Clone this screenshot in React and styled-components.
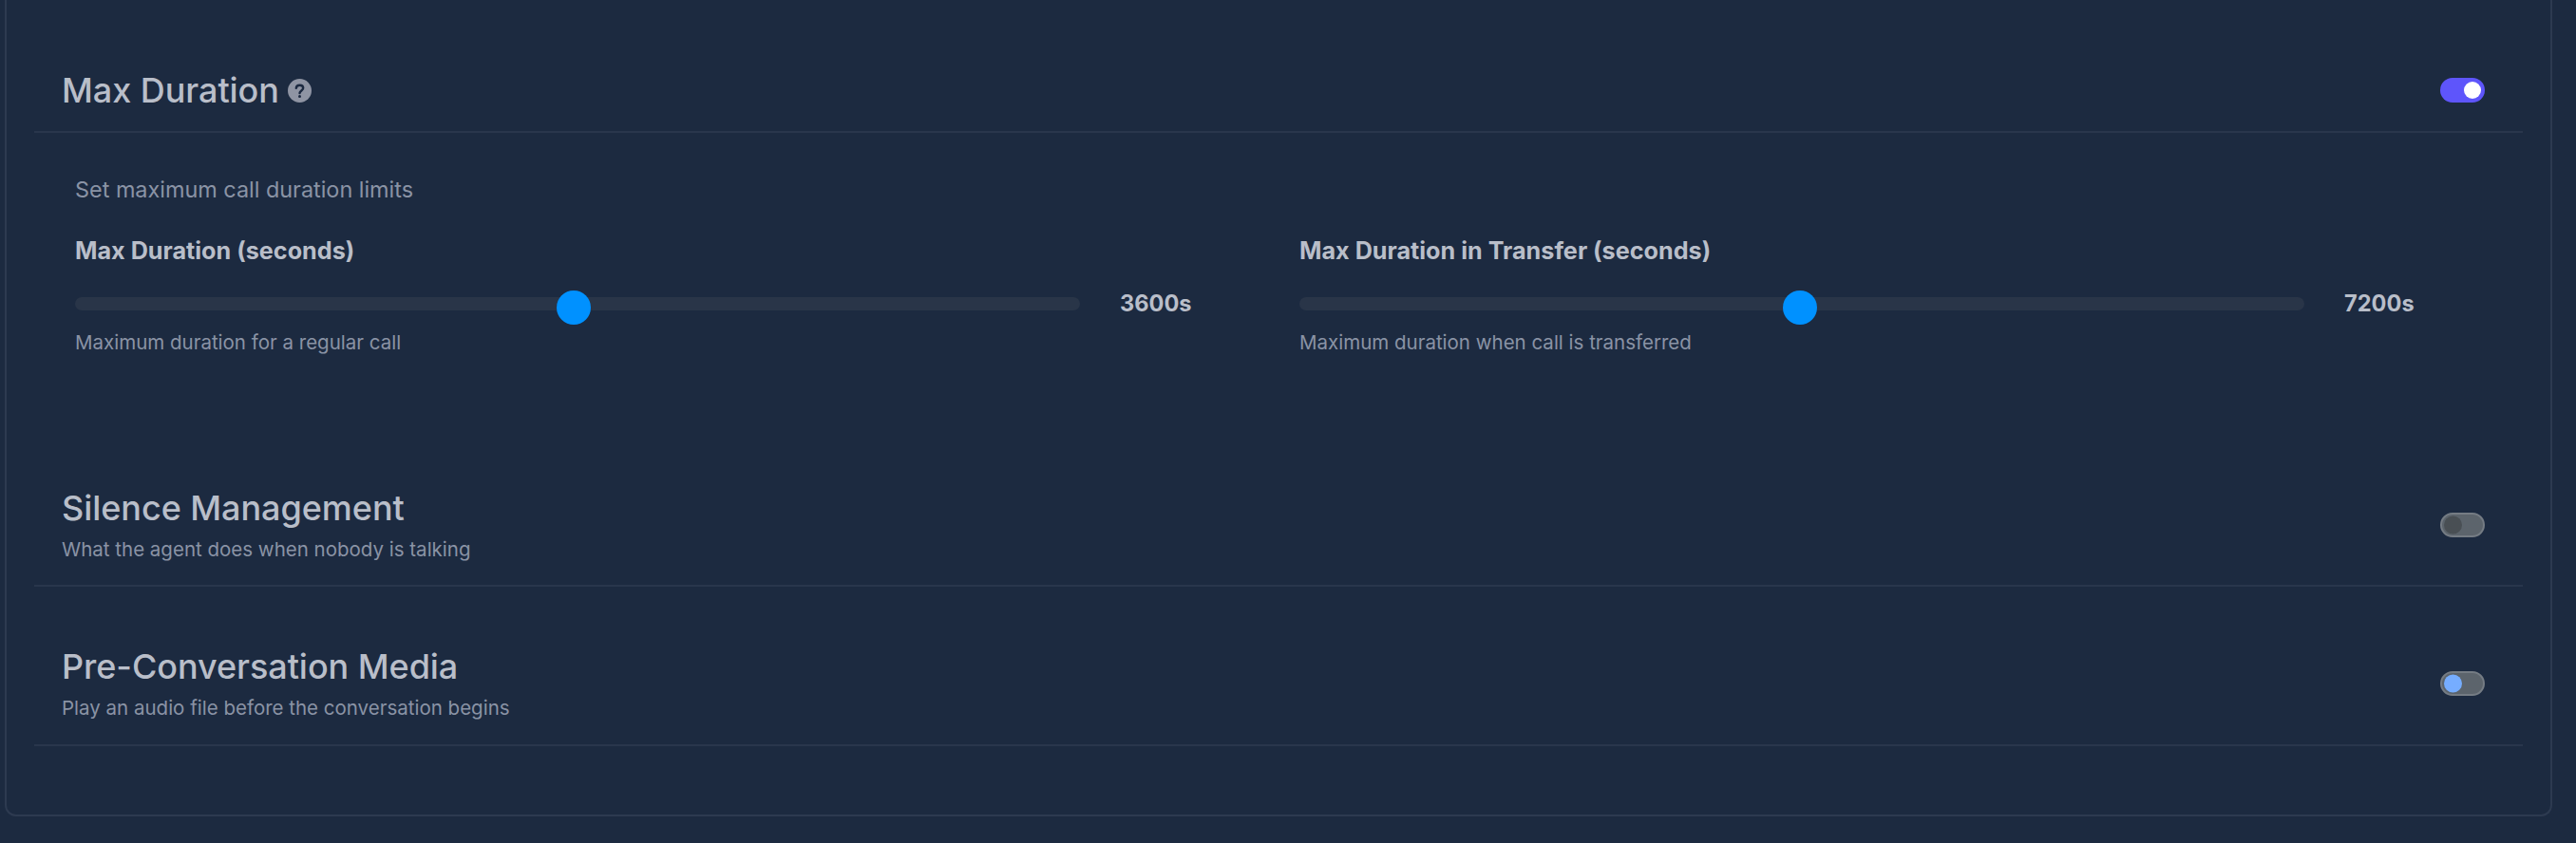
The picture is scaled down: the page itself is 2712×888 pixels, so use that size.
import styled, { createGlobalStyle } from 'styled-components'

const GlobalStyle = createGlobalStyle`
  html, body {
    margin: 0;
    padding: 0;
    background: #1c2a40;
  }
  * {
    box-sizing: border-box;
  }
`

const Page = styled.div`
  width: 2712px;
  height: 888px;
  overflow: hidden;
  padding: 0 25px 28px 5px;
  font-family: Inter, "Liberation Sans", sans-serif;
`

const Panel = styled.div`
  height: 860px;
  padding: 0 29px 0 29px;
  border: 2px solid #2d3a50;
  border-top: none;
  border-radius: 0 0 12px 12px;
`

const Section = styled.section`
  display: flex;
  flex-direction: column;
`

const Header = styled.div`
  display: flex;
  align-items: center;
  justify-content: space-between;
  height: ${p => p.$height}px;
  padding: ${p => p.$top}px 40px 0 29px;
  border-bottom: 2px solid #29364c;
`

const TitleRow = styled.div`
  display: flex;
  align-items: center;
  gap: 9px;
`

const Title = styled.h2`
  margin: 0;
  font-size: 36px;
  line-height: 44px;
  font-weight: 500;
  letter-spacing: -0.05px;
  color: #b9bec9;
`

const Subtitle = styled.p`
  margin: 8px 0 0;
  font-size: 20.5px;
  line-height: 28px;
  color: #8a93a5;
`

const HelpIcon = styled.svg`
  width: 25px;
  height: 25px;
  display: block;
`

const Toggle = styled.div`
  position: relative;
  width: 47px;
  height: 26px;
  border-radius: 13px;
  background: ${p => (p.$on ? '#5e55fb' : '#5c646c')};
  border: ${p => (p.$on ? 'none' : '2px solid #757c84')};
`

const Knob = styled.span`
  position: absolute;
  top: 50%;
  left: ${p => (p.$on ? '25px' : '2px')};
  width: ${p => (p.$on ? 18 : 19)}px;
  height: ${p => (p.$on ? 18 : 19)}px;
  border-radius: 50%;
  transform: translateY(-50%);
  background: ${p => p.$color};
`

const Body = styled.div`
  height: 309px;
  padding: 45px 0 0 43px;
`

const Hint = styled.p`
  margin: 0;
  font-size: 23.4px;
  line-height: 30px;
  color: #8a93a5;
`

const Columns = styled.div`
  display: grid;
  grid-template-columns: 1225px 1225px;
  column-gap: 64px;
  margin-top: 33px;
`

const Field = styled.div`
  display: flex;
  flex-direction: column;
`

const FieldLabel = styled.label`
  font-size: 25.2px;
  line-height: 32px;
  font-weight: 700;
  color: #b9bec9;
`

const SliderRow = styled.div`
  display: flex;
  align-items: center;
  gap: 42px;
  margin-top: 24px;
`

const Track = styled.div`
  position: relative;
  width: 1058px;
  height: 14px;
  border-radius: 7px;
  background: #293548;
`

const Thumb = styled.span`
  position: absolute;
  top: -7px;
  width: 36px;
  height: 36px;
  margin-left: -18px;
  border-radius: 50%;
  background: #0091ff;
`

const Value = styled.span`
  font-size: 23.6px;
  line-height: 32px;
  font-weight: 700;
  color: #b9bec9;
`

const Caption = styled.p`
  margin: 11px 0 0;
  font-size: 20.5px;
  line-height: 28px;
  color: #8a93a5;
`

const sliders = [
  { label: 'Max Duration (seconds)', value: '3600s', caption: 'Maximum duration for a regular call', pos: 49.6 },
  { label: 'Max Duration in Transfer (seconds)', value: '7200s', caption: 'Maximum duration when call is transferred', pos: 49.8 },
]

const App = () => {
  return (
    <Page>
      <GlobalStyle />
      <Panel>
        <Section>
          <Header $height={140} $top={52}>
            <TitleRow>
              <Title>Max Duration</Title>
              <HelpIcon viewBox="0 0 25 25">
                <circle cx="12.5" cy="12.5" r="12.5" fill="#8f94a3" />
                <path d="M8.8 9.8c.2-2 1.7-3.1 3.7-3.1 2.1 0 3.7 1.2 3.7 3.1 0 2.6-3.6 2.7-3.7 5.3" fill="none" stroke="#1c2940" strokeWidth="2.4" strokeLinecap="round" />
                <circle cx="12.5" cy="18.6" r="1.5" fill="#1c2940" />
              </HelpIcon>
            </TitleRow>
            <Toggle $on>
              <Knob $on $color="#fff" />
            </Toggle>
          </Header>
          <Body>
            <Hint>Set maximum call duration limits</Hint>
            <Columns>
              {sliders.map(s => (
                <Field key={s.label}>
                  <FieldLabel>{s.label}</FieldLabel>
                  <SliderRow>
                    <Track>
                      <Thumb style={{ left: `${s.pos}%` }} />
                    </Track>
                    <Value>{s.value}</Value>
                  </SliderRow>
                  <Caption>{s.caption}</Caption>
                </Field>
              ))}
            </Columns>
          </Body>
        </Section>
        <Section>
          <Header $height={169} $top={41}>
            <div>
              <Title>Silence Management</Title>
              <Subtitle>What the agent does when nobody is talking</Subtitle>
            </div>
            <Toggle>
              <Knob $color="#494f54" />
            </Toggle>
          </Header>
        </Section>
        <Section>
          <Header $height={168} $top={38}>
            <div>
              <Title>Pre-Conversation Media</Title>
              <Subtitle>Play an audio file before the conversation begins</Subtitle>
            </div>
            <Toggle>
              <Knob $color="#76adff" />
            </Toggle>
          </Header>
        </Section>
      </Panel>
    </Page>
  )
}

export default App
